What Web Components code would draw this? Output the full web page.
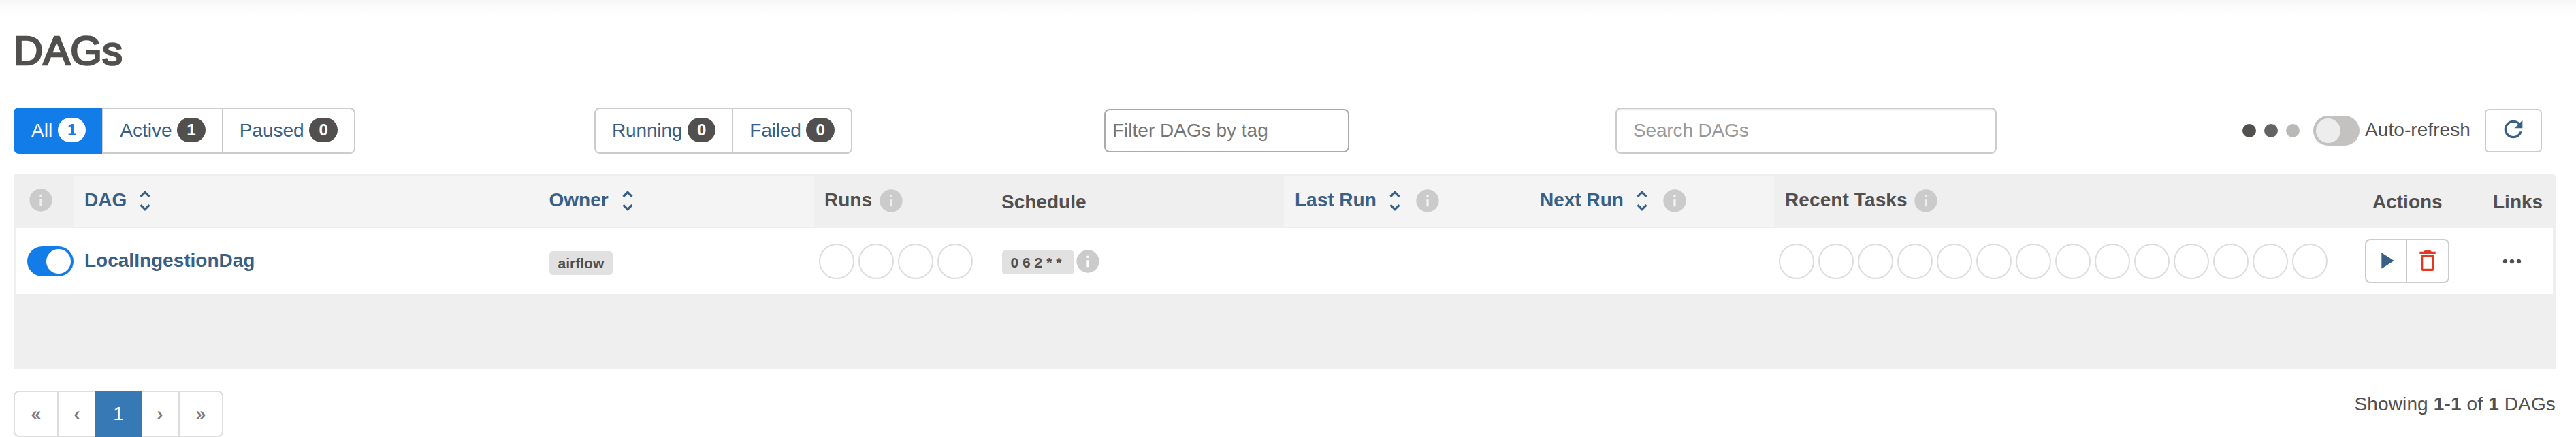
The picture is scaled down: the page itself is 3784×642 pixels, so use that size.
<!DOCTYPE html>
<html lang="en">
<head>
<meta charset="utf-8">
<title>DAGs</title>
<style>
html, body { margin: 0; background: #fff; }
body { font: 28px/32px "Liberation Sans", Arial, sans-serif; color: #51504f; height: 642px; overflow: hidden; }
</style>
</head>
<body>
<dags-page></dags-page>
<script>
const define = (name, markup) => customElements.define(name, class extends HTMLElement {
  connectedCallback() {
    if (this.shadowRoot) return;
    const root = this.attachShadow({ mode: 'open' });
    root.innerHTML = (typeof markup === 'function' ? markup(this) : markup).trim();
  }
});

const ICONS = {
  info: 'M12 2C6.48 2 2 6.48 2 12s4.48 10 10 10 10-4.48 10-10S17.52 2 12 2zm1 15h-2v-6h2v6zm0-8h-2V7h2v2z',
  sort: 'M12 5.83L15.17 9l1.41-1.41L12 3 7.41 7.59 8.83 9 12 5.83zm0 12.34L8.83 15l-1.41 1.41L12 21l4.59-4.59L15.17 15 12 18.17z',
  refresh: 'M17.65 6.35C16.2 4.9 14.21 4 12 4c-4.42 0-7.99 3.58-7.99 8s3.57 8 7.99 8c3.73 0 6.84-2.55 7.73-6h-2.08c-.82 2.33-3.04 4-5.65 4-3.31 0-6-2.69-6-6s2.69-6 6-6c1.66 0 3.14.69 4.22 1.78L13 11h7V4l-2.35 2.35z',
  play: 'M8 5v14l11-7z',
  trash: 'M16 9v10H8V9h8m-1.5-6h-5l-1 1H5v2h14V4h-3.5l-1-1zM18 7H6v12c0 1.1.9 2 2 2h8c1.1 0 2-.9 2-2V7z',
  more: 'M6 10c-1.1 0-2 .9-2 2s.9 2 2 2 2-.9 2-2-.9-2-2-2zm12 0c-1.1 0-2 .9-2 2s.9 2 2 2 2-.9 2-2-.9-2-2-2zm-6 0c-1.1 0-2 .9-2 2s.9 2 2 2 2-.9 2-2-.9-2-2-2z'
};

define('ui-icon', el => `
  <style>:host{display:block;width:40px;height:40px;flex:none}:host([name=info]){color:#cbcbcb}svg{display:block}</style>
  <svg width="40" height="40" viewBox="0 0 24 24" fill="currentColor"><path d="${ICONS[el.getAttribute('name')]}"/></svg>`);

define('filter-button', el => `
  <style>
    :host{display:flex;align-items:center;box-sizing:border-box;height:68px;padding:0 24px;border:2px solid #ccc;color:#385f86}
    :host(:not(:first-child)){margin-left:-2px}
    :host(:first-child){border-radius:8px 0 0 8px}
    :host(:last-child){border-radius:0 8px 8px 0}
    .count{margin:0 0 2px 7.8px;padding:0 14px;height:36px;border-radius:18px;background:#51504f;color:#fff;font-weight:bold;font-size:24px;line-height:36px}
    :host([active]){background:#127ce8;border-color:#127ce8;color:#fff;border-right-color:#ccc}
    :host([active]) .count{background:#fff;color:#127ce8}
  </style><slot></slot><span class="count">${el.getAttribute('count')}</span>`);

define('filter-group', `<style>:host{display:flex}</style><slot></slot>`);

define('text-field', `
  <style>
    :host{display:flex;align-items:center;box-sizing:border-box;white-space:nowrap}
    :host([kind=tags]){width:360px;height:64px;border:2px solid #aaa;border-radius:8px;padding-left:10px;color:#757575}
    :host([kind=search]){width:560px;height:68px;border:2px solid #ccc;border-radius:8px;padding-left:24px;color:#999;letter-spacing:-.15px;box-shadow:inset 0 2px 2px rgba(0,0,0,.075)}
  </style><slot></slot>`);

define('toggle-switch', `
  <style>
    :host{display:flex;box-sizing:border-box;width:68px;height:44px;border-radius:22px;padding:4px;background:#c3c2c1;flex:none}
    i{width:36px;height:36px;border-radius:50%;background:#ededed}
    :host([on]){background:#127ce8;justify-content:flex-end}
    :host([on]) i{background:#fff}
  </style><i></i>`);

define('loading-dots', `
  <style>:host{display:flex;gap:12px}i{width:20px;height:20px;border-radius:50%;background:#51504f}i:nth-of-type(2){background:#646361}i:nth-of-type(3){background:#b9b9b8}</style>
  <i></i><i></i><i></i>`);

define('icon-button', `
  <style>:host{display:flex;align-items:center;justify-content:center;box-sizing:border-box;width:84px;height:64px;border:2px solid #ccc;border-radius:6px;color:#385f86}
  ui-icon{margin-bottom:4px}</style><ui-icon name="refresh"></ui-icon>`);

define('dags-toolbar', `
  <style>
    :host{display:grid;grid-template-columns:853px 749px 751px 1fr;align-items:center;height:68px;padding:0 50px 0 20px}
    .last{display:flex;align-items:center;justify-content:space-between}
    .auto{display:flex;align-items:center}
    loading-dots{margin-right:20px}
    .label{margin:0 21px 3px 8px;letter-spacing:.08px}
    .tight{letter-spacing:-.15px}
  </style>
  <filter-group>
    <filter-button active count="1">All</filter-button><filter-button count="1">Active</filter-button><filter-button count="0">Paused</filter-button>
  </filter-group>
  <filter-group class="tight">
    <filter-button count="0">Running</filter-button><filter-button count="0">Failed</filter-button>
  </filter-group>
  <text-field kind="tags">Filter DAGs by tag</text-field>
  <div class="last">
    <text-field kind="search">Search DAGs</text-field>
    <div class="auto"><loading-dots></loading-dots><toggle-switch></toggle-switch><span class="label">Auto-refresh</span><icon-button></icon-button></div>
  </div>`);

define('head-cell', el => `
  <style>
    :host{display:flex;align-items:center;box-sizing:border-box;padding-left:16px;font-weight:bold;white-space:nowrap}
    :host([sortable]){background:#f4f4f4;color:#385f86}
    .t{margin-bottom:3px}
    :host([plain]) .t{margin:3px 0 0}
    ui-icon{margin-bottom:1px}
    ui-icon[name=sort]{margin-left:var(--sort-gap,7.5px)}
    .t + ui-icon[name=info]{margin-left:7.5px}
    ui-icon + ui-icon{margin-left:7.5px}
  </style>
  <span class="t"><slot></slot></span>
  ${el.hasAttribute('sortable') ? '<ui-icon name="sort"></ui-icon>' : ''}
  ${el.hasAttribute('info') ? '<ui-icon name="info"></ui-icon>' : ''}`);

define('tag-label', `
  <style>:host{display:block;box-sizing:border-box;height:35px;padding:0 12.6px;border-radius:5px;background:#e1e1e1;color:#51504f;font-weight:bold;font-size:21px;line-height:35px;white-space:nowrap}</style><slot></slot>`);

define('state-circles', el => `
  <style>:host{display:flex;gap:6px}i{box-sizing:border-box;width:52px;height:52px;border:2px solid #ddd;border-radius:50%}</style>
  ${'<i></i>'.repeat(+el.getAttribute('count'))}`);

define('row-actions', `
  <style>:host{display:flex;box-sizing:border-box;width:124px;height:65px;border:2px solid #ccc;border-radius:8px}
  span{display:flex;align-items:center;justify-content:center;width:58px;box-sizing:border-box;color:#385f86}
  span:first-child{padding-left:2px}
  span:last-child{border-left:2px solid #ccc;width:62px;color:#e43921}ui-icon{margin-bottom:2px}</style>
  <span><ui-icon name="play"></ui-icon></span><span><ui-icon name="trash"></ui-icon></span>`);

define('dags-table', `
  <style>
    :host{display:block;box-sizing:border-box;height:286px;margin:0 30px 0 20px;background:#efefef;border-radius:4px 4px 0 0}
    .row{display:grid;grid-template-columns:88px 682px 406px 259px 431px 360px 360px 846px 193px 109px}
    .head{padding:2px 0;height:75px}
    .body{height:97px;background:linear-gradient(#efefef,#efefef) 0 0/4px 100% no-repeat,linear-gradient(#efefef,#efefef) 100% 0/4px 100% no-repeat,#fff}
    .cell{display:flex;align-items:center;padding-left:16px}
    .name{margin-bottom:1px;font-weight:bold;color:#385f86}
  </style>
  <div class="row head">
    <head-cell style="padding-left:20px"><ui-icon name="info"></ui-icon></head-cell>
    <head-cell sortable style="--sort-gap:6.5px">DAG</head-cell>
    <head-cell sortable style="padding-left:16.5px;--sort-gap:8px">Owner</head-cell>
    <head-cell info style="padding-left:15px">Runs</head-cell>
    <head-cell plain>Schedule</head-cell>
    <head-cell sortable info>Last Run</head-cell>
    <head-cell sortable info>Next Run</head-cell>
    <head-cell info style="letter-spacing:.1px">Recent Tasks</head-cell>
    <head-cell plain style="padding-left:33px">Actions</head-cell>
    <head-cell plain style="padding-left:17px">Links</head-cell>
  </div>
  <div class="row body">
    <div class="cell" style="padding:1px 0 0 20px"><toggle-switch on></toggle-switch></div>
    <div class="cell"><span class="name">LocalIngestionDag</span></div>
    <div class="cell" style="padding-left:17px"><tag-label style="margin-top:6px">airflow</tag-label></div>
    <div class="cell" style="padding-left:7px"><state-circles count="4"></state-circles></div>
    <div class="cell" style="padding-left:17px"><tag-label style="margin-top:4px">0 6 2 * *&nbsp;</tag-label><ui-icon name="info"></ui-icon></div>
    <div class="cell"></div>
    <div class="cell"></div>
    <div class="cell" style="padding-left:7px"><state-circles count="14"></state-circles></div>
    <div class="cell" style="padding-left:22px"><row-actions></row-actions></div>
    <div class="cell" style="padding-left:25px"><ui-icon name="more"></ui-icon></div>
  </div>`);

define('page-nav', `
  <style>
    :host{display:flex;box-sizing:border-box;width:308px;height:68px;border:2px solid #ddd;border-radius:8px;color:#777}
    span{box-sizing:border-box;display:flex;align-items:center;justify-content:center;height:64px;font-size:25px;-webkit-text-stroke:.6px}
    .edge{width:62px}.step{width:56px}
    .left{border-left:2px solid #ddd}.right{border-right:2px solid #ddd}
    .on{width:68px;height:68px;margin:-2px 0;background:#3679b5;color:#fff;font-size:28px;-webkit-text-stroke:0}
  </style>
  <span class="edge">«</span><span class="step left">‹</span><span class="on">1</span><span class="step right">›</span><span class="edge">»</span>`);

define('dags-page', `
  <style>
    :host{display:block;box-sizing:border-box;height:642px;background:linear-gradient(#f6f6f6,#fbfbfb 9px,#fff 24px) 0 0/100% 24px no-repeat;overflow:hidden}
    h1{box-sizing:border-box;margin:0;padding:42px 0 0 20px;height:158px;font-weight:normal;font-size:60px;line-height:66px;-webkit-text-stroke:2.6px #51504f}
    dags-table{margin-top:30px}
    footer{display:flex;justify-content:space-between;padding:32px 30px 0 20px}
    .total{margin-top:4px;letter-spacing:.14px}
  </style>
  <h1>DAGs</h1>
  <dags-toolbar></dags-toolbar>
  <dags-table></dags-table>
  <footer><page-nav></page-nav><span class="total">Showing <b>1-1</b> of <b>1</b> DAGs</span></footer>`);
</script>
</body>
</html>
